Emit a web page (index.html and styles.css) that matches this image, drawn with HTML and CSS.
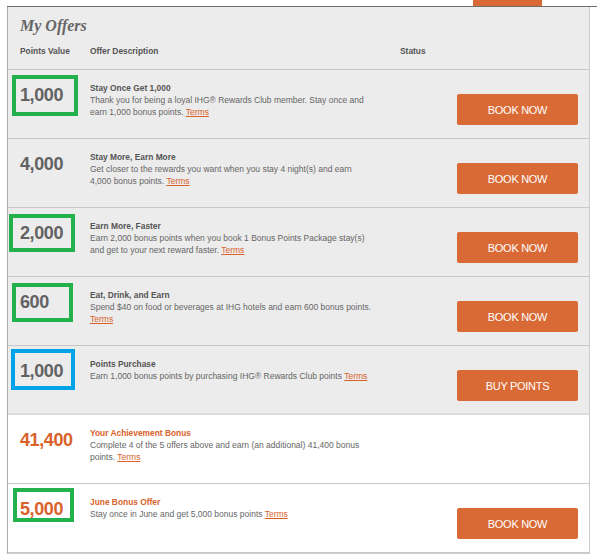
FILE: index.html
```
<!DOCTYPE html>
<html>

	<head>
		<meta charset="utf-8" />
		<title>My Offers</title>
		<link rel="stylesheet" href="styles.css">
	</head>

	<body>
		<div class="top">
			<span class="tab"></span>
		</div>

		<div class="offers">
			<div class="offers-head">
				<h2>My Offers</h2>
				<div class="cols">
					<span>Points Value</span>
					<span>Offer Description</span>
					<span>Status</span>
				</div>
			</div>

			<div class="offer">
				<div class="points">1,000</div>
				<div class="desc">
					<h3>Stay Once Get 1,000</h3>
					<p>Thank you for being a loyal IHG® Rewards Club member. Stay once and earn 1,000 bonus points. <a href="#">Terms</a></p>
				</div>
				<div class="status"><a class="btn" href="#">BOOK NOW</a></div>
				<span class="mark mark-1"></span>
			</div>

			<div class="offer">
				<div class="points">4,000</div>
				<div class="desc">
					<h3>Stay More, Earn More</h3>
					<p>Get closer to the rewards you want when you stay 4 night(s) and earn 4,000 bonus points. <a href="#">Terms</a></p>
				</div>
				<div class="status"><a class="btn" href="#">BOOK NOW</a></div>
			</div>

			<div class="offer">
				<div class="points">2,000</div>
				<div class="desc">
					<h3>Earn More, Faster</h3>
					<p>Earn 2,000 bonus points when you book 1 Bonus Points Package stay(s) and get to your next reward faster. <a href="#">Terms</a></p>
				</div>
				<div class="status"><a class="btn" href="#">BOOK NOW</a></div>
				<span class="mark mark-3"></span>
			</div>

			<div class="offer">
				<div class="points">600</div>
				<div class="desc">
					<h3>Eat, Drink, and Earn</h3>
					<p>Spend $40 on food or beverages at IHG hotels and earn 600 bonus points. <a href="#">Terms</a></p>
				</div>
				<div class="status"><a class="btn" href="#">BOOK NOW</a></div>
				<span class="mark mark-4"></span>
			</div>

			<div class="offer purchase">
				<div class="points">1,000</div>
				<div class="desc">
					<h3>Points Purchase</h3>
					<p>Earn 1,000 bonus points by purchasing IHG® Rewards Club points <a href="#">Terms</a></p>
				</div>
				<div class="status"><a class="btn" href="#">BUY POINTS</a></div>
				<span class="mark mark-5 blue"></span>
			</div>

			<div class="offer bonus">
				<div class="points">41,400</div>
				<div class="desc">
					<h3>Your Achievement Bonus</h3>
					<p>Complete 4 of the 5 offers above and earn (an additional) 41,400 bonus points. <a href="#">Terms</a></p>
				</div>
				<div class="status"></div>
			</div>

			<div class="offer bonus">
				<div class="points">5,000</div>
				<div class="desc">
					<h3>June Bonus Offer</h3>
					<p>Stay once in June and get 5,000 bonus points <a href="#">Terms</a></p>
				</div>
				<div class="status"><a class="btn" href="#">BOOK NOW</a></div>
				<span class="mark mark-7"></span>
			</div>
		</div>
	</body>

</html>
```

FILE: styles.css
```
body {
	margin: 0;
	background-color: #fff;
	font-family: "Liberation Sans", Arial, sans-serif;
}

/* strip above the panel with the tab edge */
.top {
	margin-left: 7px;
	height: 6px;
	border-bottom: 1px solid #707070;
	display: flex;
	justify-content: flex-end;
	padding-right: 55px;
}
.tab {
	width: 69px;
	background-color: #d96a35;
}

.offers {
	margin-left: 7px;
	width: 583px;
	box-sizing: border-box;
	border-left: 1px solid #aaa;
	border-right: 1px solid #ccc;
	border-bottom: 1px solid #ccc;
}

.offers-head {
	background-color: #ececec;
	padding: 9px 0 12px;
	border-bottom: 1px solid #c8c8c8;
}
.offers-head h2 {
	margin: 0 0 9px 12px;
	font: italic bold 16px/20px "Liberation Serif", Georgia, serif;
	color: #666;
}
.cols {
	display: grid;
	grid-template-columns: 82px 310px 1fr;
	font-size: 8.4px;
	font-weight: bold;
	line-height: 12px;
	color: #555;
}
.cols span:first-child {
	padding-left: 12px;
}

.offer {
	position: relative;
	display: grid;
	grid-template-columns: 82px 282px 1fr;
	height: 69px;
	box-sizing: border-box;
	padding-top: 12px;
	background-color: #ececec;
	border-bottom: 1px solid #c8c8c8;
}
.offer.purchase {
	border-bottom: 2px solid #dcdcdc;
}
.offer.bonus {
	background-color: #fff;
}

.points {
	padding: 2px 0 0 12px;
	font-size: 18px;
	font-weight: bold;
	line-height: 22px;
	letter-spacing: -0.4px;
	color: #626262;
}
.desc h3 {
	margin: 0;
	font-size: 8.4px;
	font-weight: bold;
	line-height: 12px;
	color: #555;
}
.desc p {
	margin: 0;
	font-size: 8.5px;
	line-height: 12px;
	color: #666;
}
.desc a {
	color: #d9622b;
}
.bonus .points,
.bonus h3 {
	color: #d9622b;
}

.status {
	display: flex;
	justify-content: flex-end;
	align-items: flex-start;
	padding: 12px 11px 0 0;
}
.btn {
	width: 121px;
	height: 31px;
	display: flex;
	align-items: center;
	justify-content: center;
	background-color: #d96a35;
	border-radius: 2px;
	color: #fff;
	font-size: 11px;
	letter-spacing: -0.3px;
	text-decoration: none;
}

/* highlight boxes around the point values */
.mark {
	position: absolute;
	box-sizing: border-box;
	border: 4px solid #22b14c;
}
.mark.blue {
	border-color: #00a2e8;
}
.mark-1 {
	left: 4px;
	top: 5px;
	width: 66px;
	height: 41px;
}
.mark-3 {
	left: 1px;
	top: 6px;
	width: 66px;
	height: 38px;
}
.mark-4 {
	left: 4px;
	top: 6px;
	width: 61px;
	height: 39px;
}
.mark-5 {
	left: 3px;
	top: 3px;
	width: 64px;
	height: 41px;
}
.mark-7 {
	left: 5px;
	top: 4px;
	width: 61px;
	height: 34px;
}
```
